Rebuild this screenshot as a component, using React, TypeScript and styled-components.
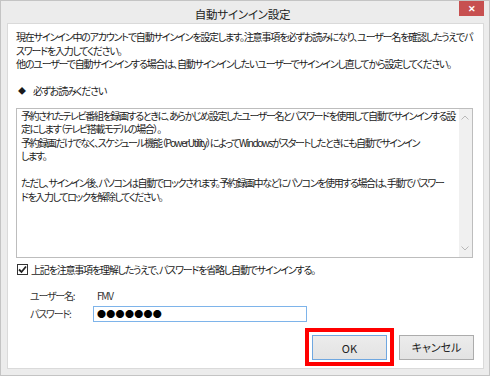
import styled, { createGlobalStyle } from 'styled-components';

const GlobalStyle = createGlobalStyle`
  html, body {
    margin: 0;
    padding: 0;
    background: #ffffff;
  }
  body {
    font-family: 'Noto Sans CJK JP', 'Noto Sans', sans-serif;
    font-feature-settings: 'palt';
    color: #1a1a1a;
  }
`;

const introLines = [
  '現在サインイン中のアカウントで自動サインインを設定します。注意事項を必ずお読みになり、ユーザー名を確認したうえでパ',
  'スワードを入力してください。',
  '他のユーザーで自動サインインする場合は、自動サインインしたいユーザーでサインインし直してから設定してください。',
];

// 空文字の行は空行として表示
const noticeLines = [
  '予約されたテレビ番組を録画するときに、あらかじめ設定したユーザー名とパスワードを使用して自動でサインインする設',
  '定にします（テレビ搭載モデルの場合）。',
  '予約録画だけでなく、スケジュール機能（PowerUtility）によってWindowsがスタートしたときにも自動でサインイン',
  'します。',
  '',
  'ただし、サインイン後、パソコンは自動でロックされます。予約録画中などにパソコンを使用する場合は、手動でパスワー',
  'ドを入力してロックを解除してください。',
];

export default function App() {
  return (
    <>
      <GlobalStyle />
      <Window>
        <TitleBar>
          <span />
          <Title>自動サインイン設定</Title>
          <CloseButton>✕</CloseButton>
        </TitleBar>
        <Client>
          <Intro>
            {introLines.map((line) => (
              <Line key={line}>{line}</Line>
            ))}
          </Intro>
          <NoticeHead>
            <Diamond>◆</Diamond>必ずお読みください
          </NoticeHead>
          <NoticeBox>
            <NoticeText>
              {noticeLines.map((line, i) => (
                <Line key={i}>{line || '\u00a0'}</Line>
              ))}
            </NoticeText>
            <ScrollBar>
              <ScrollArrow viewBox="0 0 8 5">
                <path d="M0.5 4.5 L4 1 L7.5 4.5" />
              </ScrollArrow>
              <ScrollArrow viewBox="0 0 8 5">
                <path d="M0.5 0.5 L4 4 L7.5 0.5" />
              </ScrollArrow>
            </ScrollBar>
          </NoticeBox>
          <CheckRow>
            <CheckBox>
              <svg width="9" height="9" viewBox="0 0 9 9">
                <path d="M1 4.5 L3.5 7 L8 1.5" fill="none" stroke="#222" strokeWidth="1.8" />
              </svg>
            </CheckBox>
            上記を注意事項を理解したうえで、パスワードを省略し自動でサインインする。
          </CheckRow>
          <Fields>
            <FieldLabel>ユーザー名:</FieldLabel>
            <FieldValue>FMV</FieldValue>
            <FieldLabel>パスワード:</FieldLabel>
            <PasswordBox>●●●●●●●</PasswordBox>
          </Fields>
          <ButtonRow>
            <Highlight>
              <DialogButton isDefault>OK</DialogButton>
            </Highlight>
            <DialogButton>キャンセル</DialogButton>
          </ButtonRow>
        </Client>
      </Window>
    </>
  );
}

const Window = styled.div`
  box-sizing: border-box;
  width: 490px;
  height: 376px;
  background: #ececec;
  border: 1px solid #c4c4c4;
  display: flex;
  flex-direction: column;
`;

const TitleBar = styled.div`
  height: 22px;
  display: grid;
  grid-template-columns: 1fr auto 1fr;
  align-items: start;
  padding-right: 5px;
`;

const Title = styled.div`
  font-size: 11.5px;
  letter-spacing: -0.2px;
  line-height: 22px;
  padding-top: 2px;
  color: #222;
`;

const CloseButton = styled.div`
  justify-self: end;
  width: 25px;
  height: 15px;
  background: #c75050;
  color: #fff;
  font-size: 9px;
  font-weight: 700;
  line-height: 15px;
  text-align: center;
`;

const Client = styled.div`
  flex: 1;
  margin: 0 5px 6px 6px;
  background: #fff;
  border: 1px solid #dadada;
  padding: 6px 8px 2px 8px;
  display: flex;
  flex-direction: column;
  font-size: 10px;
  letter-spacing: -1.2px;
`;

const Intro = styled.div`
  line-height: 13.5px;
`;

const Line = styled.div`
  white-space: nowrap;
`;

const NoticeHead = styled.div`
  margin-top: 13px;
  line-height: 14px;
  display: flex;
  align-items: center;
`;

const Diamond = styled.span`
  font-size: 8px;
  width: 15px;
  padding-left: 2px;
`;

const NoticeBox = styled.div`
  margin-top: 10px;
  margin-right: 2px;
  height: 150px;
  box-sizing: border-box;
  border: 1px solid #bdbdbd;
  display: flex;
`;

const NoticeText = styled.div`
  flex: 1;
  padding: 0 4px;
  line-height: 13.5px;
  letter-spacing: -1.4px;
  color: #222;
`;

const ScrollBar = styled.div`
  width: 14px;
  background: #f0f0f0;
  display: flex;
  flex-direction: column;
  justify-content: space-between;
  align-items: center;
  padding: 6px 0;
`;

const ScrollArrow = styled.svg`
  width: 8px;
  height: 5px;
  fill: none;
  stroke: #b8b8b8;
  stroke-width: 1;
`;

const CheckRow = styled.div`
  margin-top: 5px;
  display: flex;
  align-items: center;
  gap: 3px;
  line-height: 14px;
`;

const CheckBox = styled.span`
  box-sizing: border-box;
  width: 11px;
  height: 11px;
  border: 1px solid #333;
  display: inline-flex;
  align-items: center;
  justify-content: center;
  margin-left: 1px;
`;

const Fields = styled.div`
  margin-top: 11px;
  padding-left: 14px;
  display: grid;
  grid-template-columns: 63px 214px;
  row-gap: 3px;
  align-items: center;
`;

const FieldLabel = styled.div`
  color: #333;
  line-height: 15px;
`;

const FieldValue = styled.div`
  color: #333;
  padding-left: 4px;
  line-height: 15px;
`;

const PasswordBox = styled.div`
  box-sizing: border-box;
  height: 16px;
  border: 1px solid #7eb4ea;
  font-size: 9px;
  letter-spacing: 0.3px;
  line-height: 14px;
  padding-left: 3px;
  color: #000;
`;

const ButtonRow = styled.div`
  margin-top: auto;
  display: flex;
  justify-content: flex-end;
  align-items: center;
  gap: 5px;
  padding-right: 1px;
`;

const Highlight = styled.div`
  border: 4px solid #ff0000;
  padding: 3px 3px 2px 3px;
`;

const DialogButton = styled.div<{ isDefault?: boolean }>`
  box-sizing: border-box;
  width: 75px;
  height: 25px;
  background: linear-gradient(#ececec, #e3e3e3);
  border: 1px solid ${({ isDefault }) => (isDefault ? '#6fa7e0' : '#acacac')};
  display: flex;
  align-items: center;
  justify-content: center;
  color: #222;
  font-size: 11px;
  letter-spacing: 0;
`;
